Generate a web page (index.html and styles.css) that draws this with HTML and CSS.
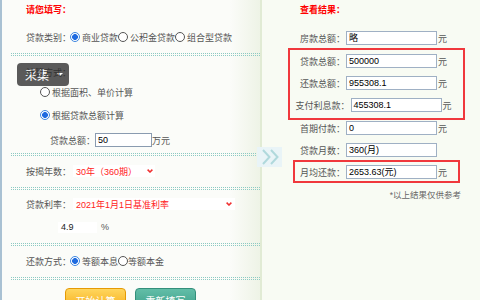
FILE: index.html
```html
<!DOCTYPE html>
<html lang="zh-CN">
<head>
<meta charset="utf-8">
<title>房贷计算器</title>
<link rel="stylesheet" href="styles.css">
</head>
<body>
<div class="page">
  <div class="left">
    <div class="title">请您填写：</div>
    <div class="row r-type">
      <span class="lbl">贷款类别：</span>
      <input type="radio" name="t" class="rd first" checked><span>商业贷款</span>
      <input type="radio" name="t" class="rd"><span>公积金贷款</span>
      <input type="radio" name="t" class="rd"><span>组合型贷款</span>
    </div>
    <div class="sep s1"></div>
    <div class="calc">
      <div class="collect">采集<span class="tri"></span></div>
      <div class="row calc-lbl"><span class="lbl">计算方式：</span></div>
      <div class="row sub"><input type="radio" name="c" class="rd"><span>根据面积、单价计算</span></div>
      <div class="row sub s2"><input type="radio" name="c" class="rd" checked><span>根据贷款总额计算</span></div>
      <div class="row amount"><span class="lbl">贷款总额：</span><span class="box">50</span><span>万元</span></div>
    </div>
    <div class="sep s2x"></div>
    <div class="row r-years">
      <span class="lbl">按揭年数：</span>
      <span class="sel sel-years">30年（360期）<svg class="chev" width="6" height="4" viewBox="0 0 6 4"><polyline points="0.6,0.6 3,3 5.4,0.6" fill="none" stroke="#f03030" stroke-width="1.5"/></svg></span>
    </div>
    <div class="sep s3"></div>
    <div class="row r-rate">
      <span class="lbl">贷款利率：</span>
      <span class="sel sel-rate">2021年1月1日基准利率<svg class="chev" width="6" height="4" viewBox="0 0 6 4"><polyline points="0.6,0.6 3,3 5.4,0.6" fill="none" stroke="#f03030" stroke-width="1.5"/></svg></span>
    </div>
    <div class="row r-pct"><span class="pct">4.9</span><span class="pct-sign">%</span></div>
    <div class="sep s4"></div>
    <div class="row r-repay">
      <span class="lbl">还款方式：</span>
      <input type="radio" name="r" class="rd first" checked><span>等额本息</span>
      <input type="radio" name="r" class="rd tight"><span>等额本金</span>
    </div>
    <div class="sep s5"></div>
    <div class="btns">
      <div class="btn btn-start">开始计算</div>
      <div class="btn btn-reset">重新填写</div>
    </div>
  </div>
  <div class="right">
    <div class="title rtitle">查看结果：</div>
    <div class="res r1"><span class="lbl">房款总额：</span><span class="out">略</span><span>元</span></div>
    <div class="hl hl1">
      <div class="res"><span class="lbl">贷款总额：</span><span class="out">500000</span><span>元</span></div>
      <div class="res"><span class="lbl">还款总额：</span><span class="out">955308.1</span><span>元</span></div>
      <div class="res"><span class="lbl">支付利息款：</span><span class="out">455308.1</span><span>元</span></div>
    </div>
    <div class="res r5"><span class="lbl">首期付款：</span><span class="out">0</span><span>元</span></div>
    <div class="res r6"><span class="lbl">贷款月数：</span><span class="out">360(月)</span><span class="blank"></span></div>
    <div class="hl hl2">
      <div class="res"><span class="lbl">月均还款：</span><span class="out">2653.63(元)</span><span>元</span></div>
    </div>
    <div class="note">*以上结果仅供参考</div>
  </div>
  <div class="arrow">
    <svg width="25" height="20" viewBox="0 0 25 20"><polyline points="6,3 12.5,10 6,17" fill="none" stroke="#b0d9dc" stroke-width="2"/><polyline points="14,3 20.5,10 14,17" fill="none" stroke="#b0d9dc" stroke-width="2"/></svg>
  </div>
</div>
</body>
</html>
```
FILE: styles.css
```css
* { box-sizing: border-box; }
html, body { margin: 0; padding: 0; }
body {
  overflow: hidden;
  background: #f8fbf3;
  font-family: "Liberation Sans", "Noto Sans CJK SC", sans-serif;
  font-size: 9px;
  color: #555;
}
.page {
  position: relative;
  display: flex;
  width: 491px;
  height: 300px;
}
.left {
  flex: none;
  width: 262px;
  height: 300px;
  border-left: 2px solid #a9c1d3;
  border-right: 2px solid #e1ebd4;
  background: linear-gradient(to right, #fbfcf9 0, #fbfcf9 228px, #eef3e6 100%);
}
.title {
  height: 20px;
  line-height: 20px;
  padding-left: 24px;
  color: #f00;
  font-weight: bold;
}
.row {
  display: flex;
  align-items: center;
  height: 20px;
  padding-left: 24px;
  white-space: nowrap;
}
.rd {
  appearance: none;
  -webkit-appearance: none;
  width: 10px;
  height: 10px;
  margin: 0 2px 0 0;
  border: 1px solid #555;
  border-radius: 50%;
  background: #fff;
  flex: none;
}
.rd:checked {
  border-color: #3d86e0;
  background: radial-gradient(circle, #1f6be0 0, #1f6be0 2.6px, #ffffff 3.2px);
}
.rd.first { margin-left: -1px; }
.rd.tight { margin-right: 0; }
.r-type { margin-top: 7px; }
.sep {
  height: 3px;
  margin-left: 9px;
  border-top: 1px dotted #8ccac3;
  border-bottom: 1px dotted #8ccac3;
}
.s1 { margin-top: 6px; }
.calc { position: relative; margin-top: 6px; }
.calc-lbl { position: relative; color: #333; }
.sub { padding-left: 38px; }
.s2 { margin-top: 3px; }
.amount { margin-top: 5px; padding-left: 48px; }
.box {
  width: 57px;
  height: 14px;
  line-height: 12px;
  padding-left: 2px;
  border: 1px solid #8a9bb0;
  background: #fff;
  color: #000;
}
.collect {
  position: absolute;
  left: 15px;
  top: 1px;
  width: 52px;
  height: 23px;
  display: flex;
  align-items: center;
  padding-left: 8px;
  border-radius: 4px;
  background: #5a5a5a;
  color: #fff;
  font-size: 12px;
}
.tri {
  width: 0;
  height: 0;
  margin-left: 8px;
  margin-top: -1px;
  border-left: 3px solid transparent;
  border-right: 3px solid transparent;
  border-top: 3px solid #fff;
}
.s2x { margin-top: 3px; }
.r-years { margin-top: 5px; }
.sel {
  display: flex;
  align-items: center;
  justify-content: space-between;
  height: 12px;
  margin-left: 2px;
  padding: 0 2px 0 3px;
  background: #fff;
  color: #f22;
}
.sel-years { width: 82px; }
.sel-rate { width: 162px; padding-right: 3px; }
.s3 { margin-top: 6px; }
.r-rate { margin-top: 4px; }
.r-pct { margin-top: 3px; }
.pct {
  width: 39px;
  height: 11px;
  line-height: 11px;
  margin-left: 32px;
  padding-left: 3px;
  background: #fff;
  color: #222;
}
.pct-sign { margin-left: 4px; }
.s4 { margin-top: 6px; }
.r-repay { margin-top: 5px; }
.s5 { margin-top: 6px; }
.btns {
  display: flex;
  gap: 9px;
  margin-top: 8px;
  padding-left: 63px;
}
.btn {
  width: 61px;
  height: 24px;
  display: flex;
  align-items: center;
  justify-content: center;
  border-radius: 4px;
  color: #fff;
  font-size: 10px;
}
.btn-start {
  background: linear-gradient(#ffd65e, #f6a912);
  border: 1px solid #e59a05;
}
.btn-reset {
  background: linear-gradient(#62bea8, #3b9c86);
  border: 1px solid #348f7b;
}
.right {
  flex: none;
  width: 229px;
  display: flex;
  flex-direction: column;
  align-items: center;
  background: #f8fbf3;
}
.rtitle { align-self: flex-start; padding-left: 38px; }
.res {
  display: flex;
  align-items: center;
  height: 16px;
  padding-right: 6px;
  white-space: nowrap;
}
.out {
  width: 91px;
  height: 14px;
  line-height: 12px;
  margin: 0 1px;
  padding-left: 2px;
  border: 1px solid #9fb0c4;
  background: #fff;
  color: #000;
}
.blank { width: 9px; }
.r1 { margin-top: 10px; }
.hl {
  display: flex;
  flex-direction: column;
  align-items: center;
  margin-top: 2px;
  border: 2px solid #f0383c;
}
.hl1 { width: 177px; padding: 3px 0 5px; gap: 6px; }
.r6 { margin-top: 6px; }
.hl2 { width: 167px; padding: 2px 0 1px; }
.note {
  align-self: flex-end;
  margin: 5px 30px 0 0;
  color: #666;
  font-size: 8.5px;
}
.arrow {
  position: absolute;
  left: 257px;
  top: 147px;
  width: 25px;
  height: 20px;
  background: #e9f4f7;
}
.arrow svg { display: block; }
```
